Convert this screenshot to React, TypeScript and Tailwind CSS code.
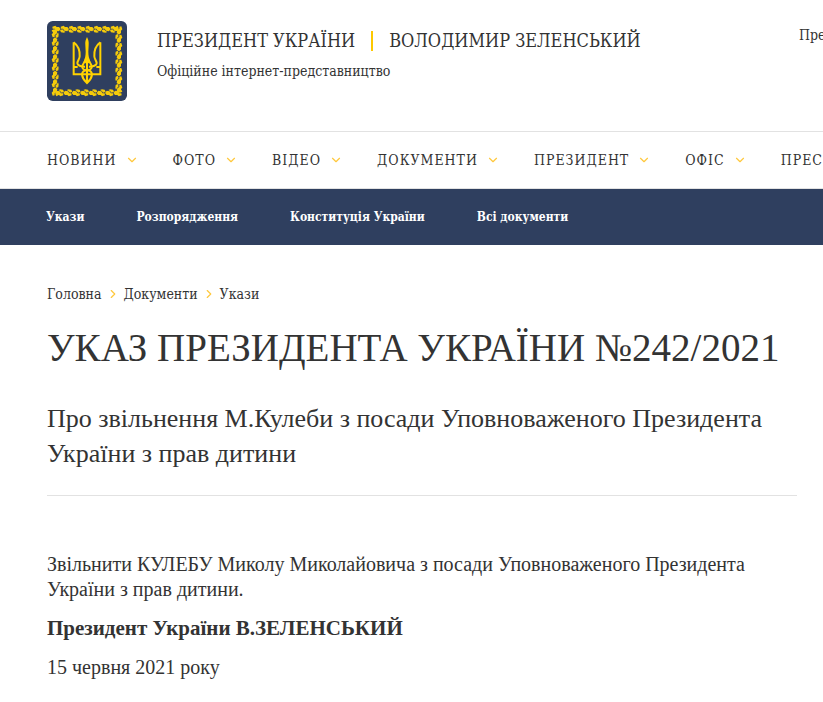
import React from 'react'
import { ChevronDown, ChevronRight } from 'lucide-react'

const navItems = ['НОВИНИ', 'ФОТО', 'ВІДЕО', 'ДОКУМЕНТИ', 'ПРЕЗИДЕНТ', 'ОФІС', 'ПРЕС']
const subNavItems = ['Укази', 'Розпорядження', 'Конституція України', 'Всі документи']
const sides = [0, 90, 180, 270]
const steps = [0, 1, 2, 3, 4, 5, 6, 7]

const Emblem = () => (
  <svg viewBox="0 0 240 240" className="size-20 shrink-0" role="img" aria-label="Герб України">
    <rect width="240" height="240" rx="17" fill="#2f3f5f" />
    {/* oak leaf border, one row per side */}
    <g fill="#f5cb0a">
      {sides.map((angle) => (
        <g key={angle} transform={`rotate(${angle} 120 120)`}>
          {steps.map((i) => (
            <g key={i} transform={`translate(${18 + i * 25} 14)`}>
              <path d="M-2 3 L7 0 L11 4 L18 4 L23 10 L18 17 L9 15 L5 9 L-1 9 Z" />
              <path d="M-4 14 L3 11 L8 16 L13 19 L7 21 L-1 20 Z" />
            </g>
          ))}
        </g>
      ))}
    </g>
    <g fill="none" stroke="#ffd200" strokeWidth="6">
      <path d="M80 64 V160 H160 V64" />
      <path d="M80 64 C94 74 99 88 98 106 C98 114 91 120 91 127 C91 133 102 137 114 137" />
      <path d="M160 64 C146 74 141 88 142 106 C142 114 149 120 149 127 C149 133 138 137 126 137" />
      <path d="M80 138 H92 M148 138 H160" />
      <path d="M117 112 C116 122 106 127 106 138 C106 144 113 148 120 148 C127 148 134 144 134 138 C134 127 124 122 123 112" />
      <path d="M105 160 C106 174 114 180 120 186 C126 180 134 174 135 160 C134 153 128 148 120 148 C112 148 106 153 105 160" />
      <path d="M120 125 V186" />
    </g>
    <path d="M120 48 C124 56 126 62 125 72 L124 92 C124 104 126 112 130 122 L120 130 L110 122 C114 112 116 104 116 92 L115 72 C114 62 116 56 120 48 Z" fill="#ffd200" />
  </svg>
)

const App = () => {
  return (
    <div className="overflow-hidden bg-white pb-5 font-['Liberation_Serif',serif] text-[#333333]">
      <header className="font-['DejaVu_Serif_Condensed','Liberation_Serif',serif]">
        <div className="flex h-[131px] items-start pt-[21px] pl-[47px] whitespace-nowrap">
          <a href="#">
            <Emblem />
          </a>
          <div className="ml-[30px] w-[642px] shrink-0 pt-2">
            <p className="flex items-center text-lg leading-6">
              <span>ПРЕЗИДЕНТ УКРАЇНИ</span>
              <span className="mx-4 h-5 w-0.5 bg-[#fdc800]" />
              <span>ВОЛОДИМИР ЗЕЛЕНСЬКИЙ</span>
            </p>
            <p className="mt-2 text-sm leading-5">Офіційне інтернет-представництво</p>
          </div>
          <a href="#" className="pt-1 text-sm leading-5">Пре</a>
        </div>

        <nav className="flex h-[58px] items-center gap-[34px] border-y border-[#e2e2e2] pl-[47px] whitespace-nowrap">
          {navItems.map((item) => (
            <a key={item} href="#" className="flex shrink-0 items-center gap-2 text-sm tracking-[1px]">
              {item}
              <ChevronDown className="size-3.5 text-[#ffc83d]" strokeWidth={2} />
            </a>
          ))}
        </nav>

        <nav className="flex h-14 items-center gap-[52px] bg-[#2f3f5f] pl-[46px] text-xs font-bold whitespace-nowrap text-white">
          {subNavItems.map((item) => (
            <a key={item} href="#">{item}</a>
          ))}
        </nav>
      </header>

      <main className="pr-[26px] pl-[47px]">
        <nav className="flex items-center gap-1 pt-[39px] font-['DejaVu_Serif_Condensed','Liberation_Serif',serif] text-sm leading-5">
          <a href="#">Головна</a>
          <ChevronRight className="size-3.5 text-[#ffc83d]" strokeWidth={2} />
          <a href="#">Документи</a>
          <ChevronRight className="size-3.5 text-[#ffc83d]" strokeWidth={2} />
          <a href="#">Укази</a>
        </nav>

        <h1 className="mt-5 text-[39px] leading-12 whitespace-nowrap">УКАЗ ПРЕЗИДЕНТА УКРАЇНИ №242/2021</h1>
        <h2 className="mt-7 border-b border-[#e2e2e2] pt-px pb-6 text-[26px] leading-[35px]">
          Про звільнення М.Кулеби з посади Уповноваженого Президента України з прав дитини
        </h2>

        <article className="mt-14 text-xl leading-[25px]">
          <p>Звільнити КУЛЕБУ Миколу Миколайовича з посади Уповноваженого Президента України з прав дитини.</p>
          <p className="mt-3.5 text-[21px] leading-[25px] font-bold">Президент України В.ЗЕЛЕНСЬКИЙ</p>
          <p className="mt-3.5">15 червня 2021 року</p>
        </article>
      </main>
    </div>
  )
}

export default App
